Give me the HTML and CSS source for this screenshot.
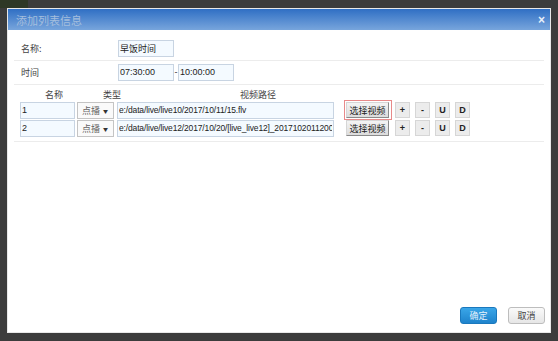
FILE: index.html
```html
<!DOCTYPE html>
<html>
<head>
  <link rel="stylesheet" href="styles.css">
</head>
<body>
  <div class="topstrip"></div>
  <div class="dialog">
    <div class="titlebar">
      <span class="title">添加列表信息</span>
      <span class="close">&#215;</span>
    </div>
    <div class="body">
      <div class="formrow">
        <span class="label">名称:</span>
        <input class="field short" value="早饭时间">
      </div>
      <div class="formrow">
        <span class="label">时间</span>
        <input class="field short" value="07:30:00">
        <span class="dash">-</span>
        <input class="field short" value="10:00:00">
      </div>

      <div class="list">
        <div class="listhead">
          <span class="h-name">名称</span>
          <span class="h-type">类型</span>
          <span class="h-path">视频路径</span>
        </div>
        <div class="listrow">
          <input class="field name" value="1">
          <div class="select">点播 <span class="arrow">&#9660;</span></div>
          <input class="field path" value="e:/data/live/live10/2017/10/11/15.flv">
          <div class="pickwrap active"><button class="btn pick">选择视频</button></div>
          <button class="btn sm">+</button>
          <button class="btn sm">-</button>
          <button class="btn sm">U</button>
          <button class="btn sm">D</button>
        </div>
        <div class="listrow">
          <input class="field name" value="2">
          <div class="select">点播 <span class="arrow">&#9660;</span></div>
          <input class="field path" value="e:/data/live/live12/2017/10/20/[live_live12]_20171020112000.flv">
          <div class="pickwrap"><button class="btn pick">选择视频</button></div>
          <button class="btn sm">+</button>
          <button class="btn sm">-</button>
          <button class="btn sm">U</button>
          <button class="btn sm">D</button>
        </div>
      </div>
    </div>
    <div class="footer">
      <button class="ok">确定</button>
      <button class="cancel">取消</button>
    </div>
  </div>
</body>
</html>
```

FILE: styles.css
```css
body {
  margin: 0;
  background-color: #3c3c3c;
  width: 558px;
  height: 341px;
  overflow: hidden;
  font-family: "Liberation Sans", "Noto Sans CJK SC", sans-serif;
  font-size: 9px;
  color: #333;
}
.topstrip {
  height: 8px;
  width: 28px;
  background-color: #2e3826;
}
.dialog {
  margin-left: 7px;
  width: 542px;
  height: 323px;
  background-color: #fff;
  border: 1px solid #e8e8e8;
  display: flex;
  flex-direction: column;
}
.titlebar {
  height: 21px;
  background: linear-gradient(#2f6fc4, #78a5dc);
  display: flex;
  align-items: center;
  justify-content: space-between;
  padding: 0 5px 0 8px;
}
.title {
  color: #a4bedd;
  font-size: 11px;
  font-family: "Noto Sans CJK SC", sans-serif;
}
.close {
  color: #e8f0fa;
  font-size: 12px;
  font-weight: bold;
}
.body {
  flex: 1;
  padding: 8px 6px 0 6px;
}
.formrow {
  display: flex;
  align-items: center;
  height: 20px;
  padding: 0 0 2px 7px;
  border-bottom: 1px solid #ececec;
  margin-bottom: 1px;
}
.label {
  width: 97px;
  color: #444;
  font-family: "Noto Sans CJK SC", sans-serif;
}
.field {
  box-sizing: border-box;
  height: 17px;
  border: 1px solid #c8d4e2;
  background-color: #f4faff;
  font-family: "Liberation Sans", "Noto Sans CJK SC", sans-serif;
  font-size: 9px;
  color: #222;
  padding: 0 1px;
  margin: 0;
  outline: none;
}
.short {
  width: 56px;
}
.dash {
  width: 4px;
  text-align: center;
}
.list {
  padding-top: 3px;
  padding-bottom: 4px;
  border-bottom: 1px solid #ececec;
}
.listhead {
  display: flex;
  height: 12px;
  line-height: 12px;
  color: #444;
  font-family: "Noto Sans CJK SC", sans-serif;
}
.h-name {
  margin-left: 31px;
}
.h-type {
  margin-left: 40px;
}
.h-path {
  margin-left: 119px;
}
.listrow {
  display: flex;
  align-items: center;
  height: 18px;
}
.name {
  width: 55px;
  margin-left: 6px;
  margin-right: 2px;
}
.select {
  box-sizing: border-box;
  width: 37px;
  height: 17px;
  border: 1px solid #c4c4c4;
  background-color: #fafafa;
  color: #666;
  font-family: "Noto Sans CJK SC", sans-serif;
  display: flex;
  align-items: center;
  padding-left: 4px;
  gap: 3px;
  margin-right: 3px;
}
.arrow {
  font-size: 5px;
  color: #333;
}
.path {
  width: 217px;
  overflow: hidden;
  font-size: 8.5px;
  letter-spacing: -0.15px;
}
.pickwrap {
  margin-left: 10px;
  padding: 1px 2px 1px 1px;
  border: 1px solid transparent;
  display: flex;
  margin-right: -2px;
}
.pickwrap.active {
  border-color: #e88a8a;
}
.btn {
  height: 16px;
  border: 1px solid #d6d6d6;
  background-color: #ececec;
  color: #222;
  font-size: 9px;
  font-family: "Noto Sans CJK SC", sans-serif;
  padding: 0;
  margin: 0;
}
.pick {
  width: 43px;
  border-bottom-color: #8a8a8a;
  border-right-color: #8a8a8a;
  background: linear-gradient(#f4f4f4, #dcdcdc);
}
.sm {
  width: 15px;
  margin-left: 5px;
  font-family: "Liberation Sans", sans-serif;
  font-weight: bold;
  font-size: 9px;
}
.footer {
  display: flex;
  justify-content: flex-end;
  gap: 11px;
  padding: 0 5px 8px 0;
}
.ok, .cancel {
  width: 37px;
  height: 17px;
  border-radius: 3px;
  font-family: "Noto Sans CJK SC", sans-serif;
  font-size: 9px;
  padding: 0;
}
.ok {
  background: linear-gradient(#3aa6e8, #1e83cc);
  border: 1px solid #1a78bd;
  color: #e4f2fc;
}
.cancel {
  background: linear-gradient(#fafafa, #e6e6e6);
  border: 1px solid #bdbdbd;
  color: #444;
}
```
